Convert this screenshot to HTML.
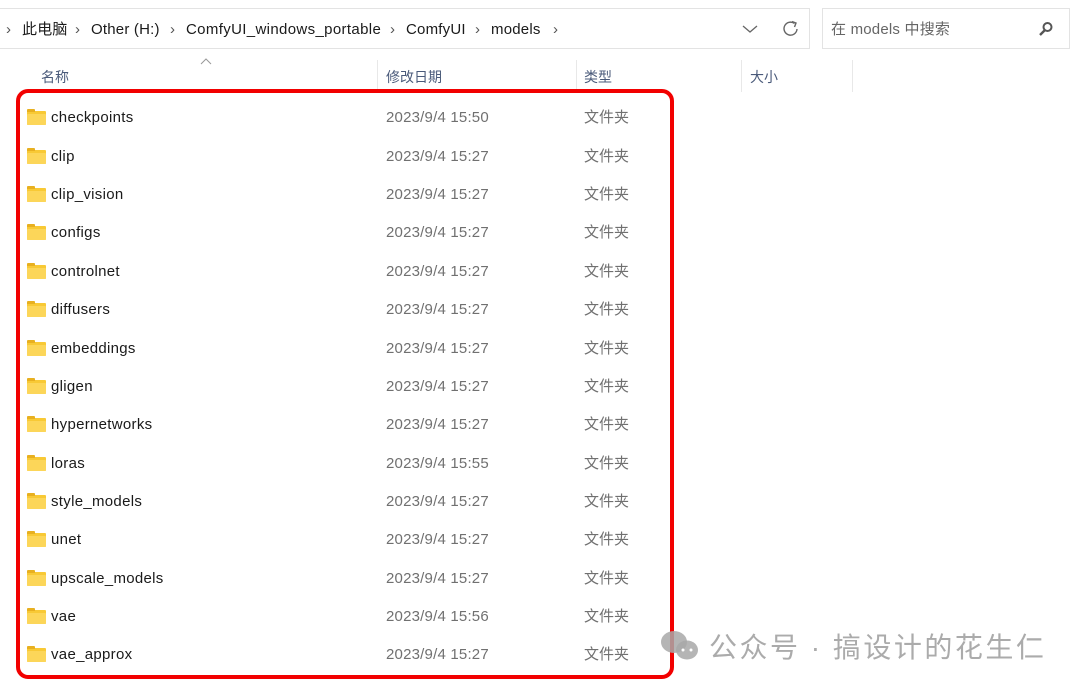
<!DOCTYPE html>
<html><head><meta charset="utf-8"><style>
body{margin:0;width:1080px;height:690px;background:#fff;position:relative;overflow:hidden;font-family:"Liberation Sans","Noto Sans CJK SC",sans-serif;}
.abs{position:absolute}
.addr{left:-2px;top:8px;width:812px;height:41px;border:1px solid #e3e3e3;box-sizing:border-box}
.search{left:822px;top:8px;width:248px;height:41px;border:1px solid #e3e3e3;box-sizing:border-box}
.crumb{top:20px;font-size:15px;line-height:20px;color:#1a1a1a;white-space:nowrap;letter-spacing:.2px}
.hdr{top:67px;font-size:14px;line-height:20px;color:#4a5a7a}
.sep{top:60px;width:1px;height:32px;background:#e8e8e8}
.row{position:absolute;left:0;height:20px;font-size:15px;line-height:20px;white-space:nowrap;margin-top:2px}
.row span{line-height:20px;top:0}
.name{position:absolute;left:51px;color:#1a1a1a;letter-spacing:.3px}
.date{position:absolute;left:386px;color:#707070;letter-spacing:.2px}
.type{position:absolute;left:584px;color:#707070}
.fold{position:absolute;left:27px;top:3px;width:19px;height:14px;background:#f8c935;border-radius:1px}
.fold:before{content:"";position:absolute;left:0;top:-2px;width:8px;height:3px;background:#e8b020;border-radius:1px 1px 0 0}
.fold:after{content:"";position:absolute;left:0;top:3px;width:19px;height:11px;background:#fcd659;border-radius:1px}
.red{left:16px;top:89px;width:658px;height:590px;border:4px solid #f20000;border-radius:12px;box-sizing:border-box}
</style></head><body>
<div class="abs addr"></div>
<div class="abs search"></div>
<div class="abs crumb" style="left:6px;color:#555">›</div>
<div class="abs crumb" style="left:22px">此电脑</div>
<div class="abs crumb" style="left:75px;color:#555">›</div>
<div class="abs crumb" style="left:91px">Other (H:)</div>
<div class="abs crumb" style="left:170px;color:#555">›</div>
<div class="abs crumb" style="left:186px;letter-spacing:.35px">ComfyUI_windows_portable</div>
<div class="abs crumb" style="left:390px;color:#555">›</div>
<div class="abs crumb" style="left:406px">ComfyUI</div>
<div class="abs crumb" style="left:475px;color:#555">›</div>
<div class="abs crumb" style="left:491px">models</div>
<div class="abs crumb" style="left:553px;color:#555">›</div>
<svg class="abs" style="left:742px;top:24px" width="16" height="10"><path d="M1 2 L8 8 L15 2" fill="none" stroke="#666" stroke-width="1.3"/></svg>
<svg class="abs" style="left:782px;top:20px" width="18" height="18"><path d="M15 9 A6.5 6.5 0 1 1 12.5 3.5" fill="none" stroke="#666" stroke-width="1.4"/><path d="M10 1.5 L14 3 L12.5 7" fill="none" stroke="#666" stroke-width="1.4"/></svg>
<div class="abs crumb" style="left:831px;color:#666">在 models 中搜索</div>
<svg class="abs" style="left:1038px;top:21px" width="16" height="16"><circle cx="9.5" cy="6" r="4" fill="none" stroke="#555" stroke-width="2"/><path d="M7 9 L2 14" stroke="#555" stroke-width="2.4"/></svg>
<svg class="abs" style="left:200px;top:58px" width="12" height="8"><path d="M1 6 L6 1 L11 6" fill="none" stroke="#999" stroke-width="1"/></svg>
<div class="abs hdr" style="left:41px">名称</div>
<div class="abs hdr" style="left:386px">修改日期</div>
<div class="abs hdr" style="left:584px">类型</div>
<div class="abs hdr" style="left:750px">大小</div>
<div class="abs sep" style="left:377px"></div>
<div class="abs sep" style="left:576px"></div>
<div class="abs sep" style="left:741px"></div>
<div class="abs sep" style="left:852px"></div>
<div class="row" style="top:106px"><i class="fold"></i><span class="name">checkpoints</span><span class="date">2023/9/4 15:50</span><span class="type">文件夹</span></div>
<div class="row" style="top:145px"><i class="fold"></i><span class="name">clip</span><span class="date">2023/9/4 15:27</span><span class="type">文件夹</span></div>
<div class="row" style="top:183px"><i class="fold"></i><span class="name">clip_vision</span><span class="date">2023/9/4 15:27</span><span class="type">文件夹</span></div>
<div class="row" style="top:221px"><i class="fold"></i><span class="name">configs</span><span class="date">2023/9/4 15:27</span><span class="type">文件夹</span></div>
<div class="row" style="top:260px"><i class="fold"></i><span class="name">controlnet</span><span class="date">2023/9/4 15:27</span><span class="type">文件夹</span></div>
<div class="row" style="top:298px"><i class="fold"></i><span class="name">diffusers</span><span class="date">2023/9/4 15:27</span><span class="type">文件夹</span></div>
<div class="row" style="top:337px"><i class="fold"></i><span class="name">embeddings</span><span class="date">2023/9/4 15:27</span><span class="type">文件夹</span></div>
<div class="row" style="top:375px"><i class="fold"></i><span class="name">gligen</span><span class="date">2023/9/4 15:27</span><span class="type">文件夹</span></div>
<div class="row" style="top:413px"><i class="fold"></i><span class="name">hypernetworks</span><span class="date">2023/9/4 15:27</span><span class="type">文件夹</span></div>
<div class="row" style="top:452px"><i class="fold"></i><span class="name">loras</span><span class="date">2023/9/4 15:55</span><span class="type">文件夹</span></div>
<div class="row" style="top:490px"><i class="fold"></i><span class="name">style_models</span><span class="date">2023/9/4 15:27</span><span class="type">文件夹</span></div>
<div class="row" style="top:528px"><i class="fold"></i><span class="name">unet</span><span class="date">2023/9/4 15:27</span><span class="type">文件夹</span></div>
<div class="row" style="top:567px"><i class="fold"></i><span class="name">upscale_models</span><span class="date">2023/9/4 15:27</span><span class="type">文件夹</span></div>
<div class="row" style="top:605px"><i class="fold"></i><span class="name">vae</span><span class="date">2023/9/4 15:56</span><span class="type">文件夹</span></div>
<div class="row" style="top:643px"><i class="fold"></i><span class="name">vae_approx</span><span class="date">2023/9/4 15:27</span><span class="type">文件夹</span></div>
<div class="abs red"></div>
<svg class="abs" style="left:658px;top:628px" width="44" height="36"><ellipse cx="16" cy="14" rx="13" ry="11" fill="#a8a8a8" opacity=".85"/><ellipse cx="29" cy="22" rx="11" ry="9.5" fill="#a8a8a8" opacity=".85"/><circle cx="25" cy="22" r="1.5" fill="#fff"/><circle cx="33" cy="22" r="1.5" fill="#fff"/></svg>
<div class="abs" style="left:709px;top:628px;font-size:28px;line-height:40px;color:#ababab;letter-spacing:2.5px;white-space:nowrap">公众号 · 搞设计的花生仁</div>
</body></html>
